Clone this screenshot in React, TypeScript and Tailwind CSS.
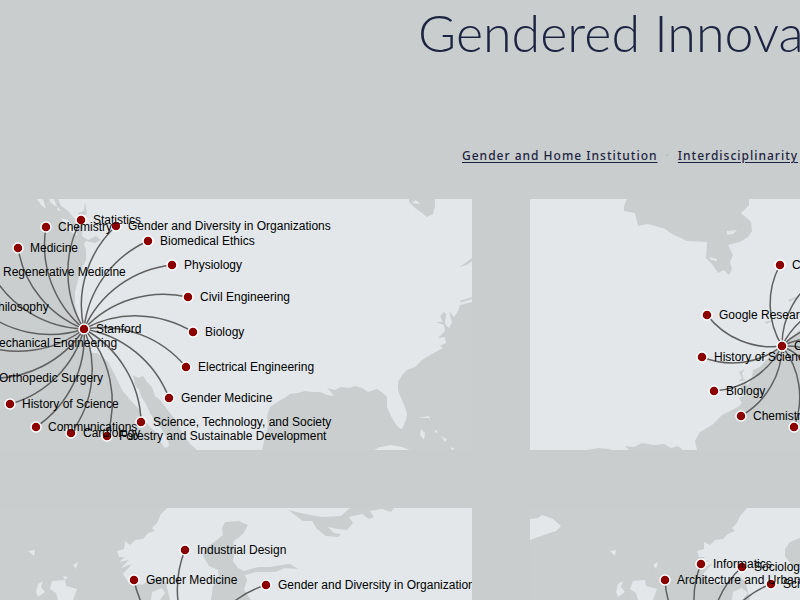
import type { ReactNode } from "react";

type Point = [number, number];
type Node = { x: number; y: number; label?: string };

const LAND = "#e3e7ea";
const WATER = "#cacecf";

function arc([hx, hy]: Point, { x, y }: Node) {
  const r = Math.hypot(x - hx, y - hy);
  return `M${hx},${hy}A${r},${r} 0 0,1 ${x},${y}`;
}

function Network({ hub, name, nodes }: { hub: Point; name?: string; nodes: Node[] }) {
  const all: Node[] = [{ x: hub[0], y: hub[1], label: name }, ...nodes];
  return (
    <g>
      {nodes.map((n, i) => (
        <path key={i} d={arc(hub, n)} fill="none" stroke="#606060" strokeWidth="1.5" />
      ))}
      {all.map((n, i) => (
        <circle key={i} cx={n.x} cy={n.y} r="5" fill="#8b0000" stroke="#fff" strokeWidth="1.5" />
      ))}
      {all.map((n, i) =>
        n.label ? (
          <text key={i} x={n.x + 12} y={n.y + 4} fill="#000">
            {n.label}
          </text>
        ) : null,
      )}
    </g>
  );
}

const stanford: Node[] = [
  { x: 81, y: 220, label: "Statistics" },
  { x: 46, y: 227, label: "Chemistry" },
  { x: 116, y: 226, label: "Gender and Diversity in Organizations" },
  { x: 148, y: 241, label: "Biomedical Ethics" },
  { x: 18, y: 248, label: "Medicine" },
  { x: 172, y: 265, label: "Physiology" },
  { x: -9, y: 272, label: "Regenerative Medicine" },
  { x: 188, y: 297, label: "Civil Engineering" },
  { x: -22, y: 307, label: "Philosophy" },
  { x: 193, y: 332, label: "Biology" },
  { x: -23, y: 343, label: "Mechanical Engineering" },
  { x: 186, y: 367, label: "Electrical Engineering" },
  { x: -13, y: 378, label: "Orthopedic Surgery" },
  { x: 169, y: 398, label: "Gender Medicine" },
  { x: 10, y: 404, label: "History of Science" },
  { x: 141, y: 422, label: "Science, Technology, and Society" },
  { x: 36, y: 427, label: "Communications" },
  { x: 71, y: 433, label: "Cardiology" },
  { x: 107, y: 436, label: "Forestry and Sustainable Development" },
];

const east: Node[] = [
  { x: 780, y: 265, label: "Computer Science" },
  { x: 707, y: 315, label: "Google Research" },
  { x: 702, y: 357, label: "History of Science" },
  { x: 714, y: 391, label: "Biology" },
  { x: 741, y: 416, label: "Chemistry" },
  { x: 794, y: 427 },
  { x: 822, y: 275 },
  { x: 850, y: 300 },
  { x: 862, y: 325 },
  { x: 864, y: 352 },
  { x: 855, y: 384 },
  { x: 830, y: 412 },
];

const north: Node[] = [
  { x: 185, y: 550, label: "Industrial Design" },
  { x: 134, y: 580, label: "Gender Medicine" },
  { x: 266, y: 585, label: "Gender and Diversity in Organizations" },
];

const britain: Node[] = [
  { x: 701, y: 564, label: "Informatics" },
  { x: 742, y: 567, label: "Sociology" },
  { x: 665, y: 580, label: "Architecture and Urban Design" },
  { x: 771, y: 584, label: "Science" },
];

function RegionMap({ box, title, children }: { box: string; title: string; children: ReactNode }) {
  return (
    <svg
      viewBox={box}
      role="img"
      aria-label={title}
      className="block w-full bg-[#cacecf] font-['Liberation_Sans',Arial,sans-serif] text-[12px]"
    >
      {children}
    </svg>
  );
}

export default function App() {
  return (
    <main className="h-screen overflow-hidden bg-[#c9cdce] text-[#1d2442]">
      <h1 className="ml-[418px] whitespace-nowrap pt-[2px] font-['Lato',sans-serif] text-[52px] leading-[60px] font-light">
        Gendered Innovations
      </h1>
      <nav className="mt-[82px] ml-[462px] flex h-6 items-center gap-2 whitespace-nowrap font-['Noto_Sans',sans-serif] text-[12px] font-medium tracking-[1px]">
        <a href="#institution" className="underline underline-offset-2">Gender and Home Institution</a>
        <span className="text-[#b3b9b2]">·</span>
        <a href="#interdisciplinarity" className="underline underline-offset-2">Interdisciplinarity</a>
      </nav>
      <div className="mt-[31px] grid grid-cols-[472fr_270fr] gap-[58px]">
        <RegionMap box="0 199 472 251" title="Stanford">
          <path
            fill={LAND}
            d="M58,199L61,206L67,210L76,220L83,226L82,236L88,240L96,236L101,240L95,243L86,241L84,244L86,250L86,260L81,270L78,280L75,292L75,304L78,316L82,327L87,343L91,353L97,353L104,358L108,362L115,375L122,390L133,403L138,408L143,417L150,427L157,433L160,441L165,448L169,446L168,440L160,427L155,421L150,413L146,404L142,398L139,390L135,385L133,375L138,378L143,376L147,382L152,387L155,396L160,400L170,413L177,422L182,432L190,444L197,450H262L265,437L268,426L267,416L270,407L279,401L286,397L290,394L298,393L305,391L312,392L320,392L327,395L334,396L330,391L327,388L335,390L341,387L350,388L355,386L362,388L368,392L377,389L383,393L387,397L387,407L391,416L395,423L399,428L402,429L406,420L407,414L405,407L401,398L398,390L398,382L402,375L407,370L415,367L422,360L430,355L443,348L440,346L446,343L445,337L438,338L445,331L444,325L436,322L443,322L440,316L444,312L446,314L445,324L449,328L452,322L449,311L454,317L458,311L460,305L472,302V199H435L435,206L433,214L427,217L422,213L415,208L409,202V199ZM416,200L420,204L412,203Z"
          />
          <g fill={LAND}>
            <path d="M37,199H43L46,209L41,205ZM49,199H54L57,207L51,203ZM61,218L68,220L75,229L78,236L69,231ZM58,207L61,211L57,210Z" />
            <path d="M374,450L380,447L391,445L402,447L410,450ZM421,429L425,433L424,440L420,435ZM418,418L429,416L431,423L429,418ZM434,429L438,432L436,433ZM441,436L447,439L445,442ZM450,447L455,449L452,450Z" />
          </g>
          <path fill={WATER} d="M78,213L84,211L85,202L87,214L79,216ZM472,258L464,264L459,267L467,265L472,261ZM459,301L472,297V299L462,302Z" />
          <Network hub={[84, 329]} name="Stanford" nodes={stanford} />
        </RegionMap>
        <RegionMap box="530 199 270 251" title="Eastern United States">
          <rect x="530" y="199" width="270" height="251" fill={LAND} />
          <g fill={WATER}>
            <path d="M627,199L624,206L624,211L635,213L638,226L647,224L652,225L665,229L672,234L687,241L707,242L706,258L712,264L718,273L724,270L729,275L732,269L730,262L733,255L728,245L740,242L748,237L752,231L751,222L741,213L749,205V199Z" />
            <path d="M697,450L695,441L700,432L712,425L722,415L738,407L742,403L739,398L746,394L740,386L746,384L743,376L748,386L752,377L753,370L760,367L768,358L777,350L787,340L800,330V450Z" />
            <path d="M738,381L742,378L739,372L745,369L742,373L744,381ZM587,450L598,448L609,449L611,450ZM625,446L634,447L642,443L654,445L664,444L671,448L678,446L683,450H629ZM788,300L800,295L790,302ZM765,322L776,319L766,324Z" />
          </g>
          <path fill={LAND} d="M709,257L717,259L717,261L711,260ZM727,231L737,230L733,234L727,235Z" />
          <Network hub={[782, 346]} name="Cambridge" nodes={east} />
        </RegionMap>
        <RegionMap box="0 508 472 92" title="Northern Europe">
          <path
            fill={LAND}
            d="M167,508L161,514L157,523L152,528L155,531L148,533L143,539L135,540L130,545L125,541L124,549L117,551L119,557L125,557L119,562L129,560L121,568L132,564L123,574L128,582L142,585L153,578L161,577L166,584L170,600H472V508H394L391,512L382,509L370,511L374,517L369,519L362,514L349,517L353,523L347,530L338,529L328,527L334,533L341,534L338,537L326,536L317,529L312,521L303,521L288,510L305,514L322,517L341,516L350,508Z"
          />
          <path
            fill={WATER}
            d="M248,525L239,521L225,522L222,528L223,535L213,543L205,548L203,556L209,566L218,570L219,578L213,586L211,600H251L244,590L247,580L245,575L256,572L275,572L285,568L298,569L290,564L282,565L270,567L258,567L244,571L238,568L233,561L235,550L233,542L243,534ZM160,583L167,582L163,592Z"
          />
          <path
            fill={LAND}
            d="M52,581L65,580L66,586L77,589L73,600H58L56,593L50,589ZM38,584L43,581L41,587L45,592L38,597L36,592ZM28,551L35,550L34,556ZM73,565L78,562L76,569ZM63,576L68,577L65,580ZM152,592L162,588L165,593L160,600H151Z"
          />
          <Network hub={[200, 655]} nodes={north} />
        </RegionMap>
        <RegionMap box="530 508 270 92" title="Britain">
          <path
            fill={LAND}
            d="M747,508L740,516L737,523L732,528L735,531L728,534L723,539L715,540L710,545L704,542L704,549L697,551L699,557L705,557L699,562L709,560L701,568L712,564L703,574L708,582L722,585L733,578L741,577L746,584L750,600H800V508ZM530,519L538,518L542,515L553,519L561,526L556,531L544,535L530,540ZM633,581L645,580L646,586L657,589L653,600H638L636,593L630,589ZM618,584L623,581L621,587L625,592L618,597L616,592ZM610,551L616,550L615,556ZM653,565L658,562L656,569ZM733,592L742,588L748,593L742,600H732Z"
          />
          <path fill={WATER} d="M800,538L790,542L785,549L785,556L792,566L800,570ZM740,583L747,582L744,591Z" />
          <Network hub={[713, 655]} nodes={britain} />
        </RegionMap>
      </div>
    </main>
  );
}
